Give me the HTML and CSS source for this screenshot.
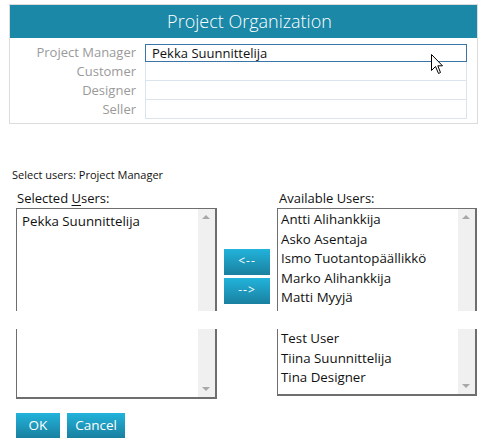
FILE: index.html
```html
<!DOCTYPE html>
<html>
<head>
<meta charset="utf-8">
<link rel="stylesheet" href="styles.css">
</head>
<body>
<div class="page">
  <div class="panel">
    <div class="header">Project Organization</div>
    <div class="rows">
      <div class="row first"><div class="lbl">Project Manager</div><div class="inp active">Pekka Suunnittelija</div></div>
      <div class="row"><div class="lbl">Customer</div><div class="inp"></div></div>
      <div class="row"><div class="lbl">Designer</div><div class="inp"></div></div>
      <div class="row"><div class="lbl">Seller</div><div class="inp"></div></div>
    </div>
    <svg class="cursor" width="13" height="21" viewBox="0 0 13 21"><path d="M0.5 0.5 L0.5 16.5 L4.5 12.5 L7.5 19.5 L9.5 18.5 L6.8 11.8 L11.5 11.8 Z" fill="#fff" stroke="#000" stroke-width="1" stroke-linejoin="miter"/></svg>
  </div>

  <div class="caption">Select users: Project Manager</div>

  <div class="dual">
    <div class="col left">
      <div class="col-label">Selected <u>U</u>sers:</div>
      <div class="lb lb-left">
        <div class="lb-top">
          <div class="items items-left"><div>Pekka Suunnittelija</div></div>
          <div class="sb"><span class="arr up"></span></div>
        </div>
        <div class="lb-gap"></div>
        <div class="lb-bot">
          <div class="items items-left"></div>
          <div class="sb sb-bot"><span class="arr down"></span></div>
        </div>
      </div>
    </div>

    <div class="mid">
      <div class="btn mv">&lt;--</div>
      <div class="btn mv">--&gt;</div>
    </div>

    <div class="col right">
      <div class="col-label rl">Available Users:</div>
      <div class="lb lb-right">
        <div class="lb-top">
          <div class="items items-right">
            <div>Antti Alihankkija</div>
            <div>Asko Asentaja</div>
            <div>Ismo Tuotantopäällikkö</div>
            <div>Marko Alihankkija</div>
            <div>Matti Myyjä</div>
          </div>
          <div class="sb"><span class="arr up"></span></div>
        </div>
        <div class="lb-gap"></div>
        <div class="lb-bot">
          <div class="items items-right bot-items">
            <div>Test User</div>
            <div>Tiina Suunnittelija</div>
            <div>Tina Designer</div>
          </div>
          <div class="sb sb-bot"><span class="arr down"></span></div>
        </div>
      </div>
    </div>
  </div>

  <div class="actions">
    <div class="btn ok">OK</div>
    <div class="btn cancel">Cancel</div>
  </div>
</div>
</body>
</html>
```

FILE: styles.css
```css
html, body {
  margin: 0;
  padding: 0;
  background: #fff;
}
body {
  font-family: "Open Sans", "Noto Sans", sans-serif;
  color: #111;
}
.page {
  width: 490px;
  height: 442px;
  padding-top: 4px;
  box-sizing: border-box;
}
.panel {
  position: relative;
  margin-left: 9px;
  width: 469px;
  height: 120px;
  box-sizing: border-box;
  border: 1px solid #dcdcdc;
}
.header {
  height: 33px;
  background: #1b88a7;
  color: #fff;
  font-weight: 300;
  font-size: 18px;
  line-height: 33px;
  text-align: center;
  padding-left: 12px;
}
.rows {
  padding-top: 6px;
  display: flex;
  flex-direction: column;
}
.row {
  display: flex;
  align-items: center;
  height: 19px;
}
.row.first {
  height: 18px;
}
.lbl {
  width: 126px;
  text-align: right;
  color: #9a9a9a;
  font-size: 13px;
  line-height: 18px;
  padding-bottom: 2px;
}
.inp {
  margin-left: 9px;
  width: 322px;
  height: 19px;
  box-sizing: border-box;
  border: 1px solid #dbe4ec;
  border-top: none;
  font-size: 13px;
  line-height: 17px;
  padding-left: 6px;
  color: #111;
}
.inp.active {
  border: 1px solid #3b74a6;
  height: 18px;
  line-height: 16px;
}
.cursor {
  position: absolute;
  left: 421px;
  top: 49px;
}
.caption {
  margin-top: 44px;
  margin-left: 12px;
  font-size: 11px;
  line-height: 14px;
  height: 14px;
}
.dual {
  display: flex;
  margin-top: 6px;
}
.col-label {
  font-size: 13px;
  line-height: 20px;
  height: 20px;
  padding-left: 1px;
}
.col-label u {
  text-decoration-thickness: 1px;
  text-underline-offset: 2px;
}
.left {
  margin-left: 16px;
  width: 201px;
}
.right {
  margin-left: 7px;
  width: 200px;
}
.rl {
  padding-left: 2px;
}
.lb {
  display: flex;
  flex-direction: column;
}
.lb-top {
  display: flex;
  height: 103px;
  box-sizing: border-box;
  border-style: solid;
  border-color: #6e6e6e;
  border-width: 1px 2px 0 1px;
}
.lb-gap {
  height: 18px;
}
.lb-bot {
  display: flex;
  box-sizing: border-box;
  border-style: solid;
  border-color: #6e6e6e;
  border-width: 0 2px 2px 1px;
}
.lb-left .lb-bot { height: 70px; }
.lb-right .lb-bot { height: 67px; }
.items {
  flex: 1;
  font-size: 13.3px;
  line-height: 19.5px;
}
.items-left { padding: 3px 0 0 5px; }
.items-right { padding: 1px 0 0 3px; }
.items-right.bot-items { padding-top: 0; }
.sb {
  width: 17px;
  background: #f0f0f0;
  position: relative;
}
.arr {
  position: absolute;
  left: 4px;
  width: 0;
  height: 0;
  border-left: 4px solid transparent;
  border-right: 4px solid transparent;
}
.arr.up {
  top: 6px;
  border-bottom: 4px solid #a8a8a8;
}
.arr.down {
  bottom: 6px;
  border-top: 4px solid #a8a8a8;
}
.mid {
  margin-left: 7px;
  width: 46px;
  display: flex;
  flex-direction: column;
  gap: 3px;
  padding-top: 61px;
}
.btn {
  background: linear-gradient(#22b3db, #1a80a0);
  color: #fff;
  text-align: center;
  box-sizing: border-box;
}
.mv {
  height: 26px;
  line-height: 24px;
  font-size: 12px;
  letter-spacing: 1px;
}
.actions {
  display: flex;
  gap: 7px;
  margin-left: 16px;
  margin-top: 14px;
}
.ok, .cancel {
  height: 25px;
  line-height: 25px;
  font-size: 13.5px;
}
.ok { width: 44px; }
.cancel { width: 58px; }
```
